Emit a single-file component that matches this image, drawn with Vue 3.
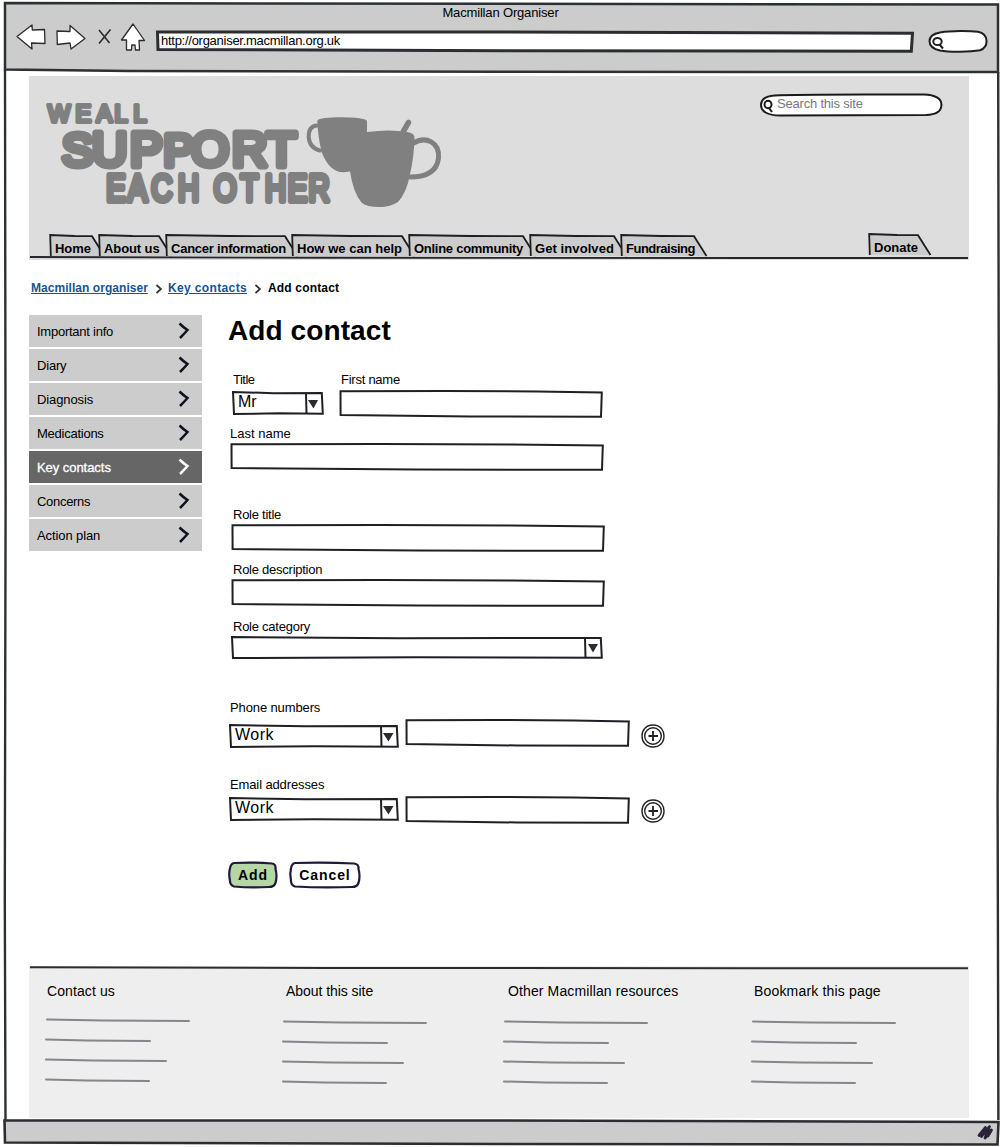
<script setup>
const tabs = [
  { label: 'Home', w: 49, ls: -0.05 },
  { label: 'About us', w: 67, ls: -0.1 },
  { label: 'Cancer information', w: 126, ls: -0.23 },
  { label: 'How we can help', w: 117, ls: 0.02 },
  { label: 'Online community', w: 121, ls: -0.27 },
  { label: 'Get involved', w: 91, ls: 0.08 },
  { label: 'Fundraising', w: 80, ls: -0.5 },
]
const donate = { label: 'Donate', w: 56, ls: 0 }

const menu = [
  { label: 'Important info', ls: -0.25 },
  { label: 'Diary', ls: -0.2 },
  { label: 'Diagnosis', ls: -0.1 },
  { label: 'Medications', ls: -0.25 },
  { label: 'Key contacts', ls: -0.05, active: true },
  { label: 'Concerns', ls: -0.3 },
  { label: 'Action plan', ls: -0.1 },
]

const columns = [
  { title: 'Contact us', cls: 'c1' },
  { title: 'About this site', cls: 'c2' },
  { title: 'Other Macmillan resources', cls: 'c3' },
  { title: 'Bookmark this page', cls: 'c4' },
]
const rules = [
  { x: 2, w: 144 },
  { x: 1, w: 106 },
  { x: 1, w: 122 },
  { x: 1, w: 105 },
]

// Slightly uneven rectangle, as if drawn with a pen
const inputPath = (w, h) =>
  `M1.5 1.2L${w * 0.4} 1L${w * 0.75} 1.4L${w - 1.2} 2.6L${w - 2} ${h - 1.2}L${w * 0.5} ${h - 1.5}L1.6 ${h - 3}Z`
const selectPath = (w, h) =>
  `M1 1L${w * 0.45} 2.2L${w - 2.2} 2L${w - 1.2} ${h - 1.2}L${w * 0.5} ${h - 1.7}L2 ${h - 1}Z` +
  `M${w - 18} 2L${w - 17.5} ${h - 1.5}`
const tabPath = (w) => `M.8 22L.2 1L${w / 2} 2L${w - 7} 2.2L${w + 5.5} 22`
</script>

<template>
  <div class="window">
    <svg class="frame" width="1001" height="1147" fill="none" stroke="#2d3033" stroke-width="2.4">
      <path d="M5 70L5.6 500L4.8 900L5.5 1120" />
      <path d="M998.2 72L998.8 400L997.6 800L998.4 1120" />
    </svg>

    <header class="chrome">
      <svg class="back" width="1001" height="76">
        <path d="M5 3L500 3.8L998 4.5L998 72L500 71.8L130 71L5 69.5Z" fill="#ccc" stroke="#2d3033" stroke-width="2.5" />
      </svg>
      <div class="title">Macmillan Organiser</div>
      <div class="toolbar">
        <svg class="nav-icons" width="132" height="32" viewBox="0 0 132 32" fill="#fff" stroke="#2b2b2f" stroke-width="1.3" stroke-linejoin="round">
          <path d="M1 14.5L16 3L16.3 8L28.5 7.5L29 21.5L15.5 21L16 27Z" />
          <path d="M41 9L54 9.5L54 3.5L69 16.5L55 27L54 21L41.3 22.5Z" />
          <path d="M83 8L93.5 21M94.5 7.5L83 21.5" fill="none" stroke-width="1.6" />
          <path d="M117 2L128.5 18.5L123 18.5L123.5 28L119.5 28L119 23L115.8 23L115.5 28L110.5 28L110.5 18L105.5 18Z" />
        </svg>
        <div class="address">
          <svg class="back" width="758" height="24"><path d="M1.5 2L350 2L756.5 3.3L755.3 21.3L350 20.8L2 19.5Z" fill="#fff" stroke="#2b2d30" stroke-width="3" /></svg>
          <span>http://organiser.macmillan.org.uk</span>
        </div>
        <svg class="mini-search" width="60" height="24" fill="#fff" stroke="#1f1f22" stroke-width="2">
          <path d="M12 2.5C24 .5 42 .8 50 1.8C61 4 61 17 52 20.3C42 22 22 22.5 12 20.5C-2 17 -2 5 12 2.5Z" />
          <ellipse cx="9.5" cy="11.5" rx="4.2" ry="3.6" />
          <path d="M11.5 14.5L15 18.5" />
        </svg>
      </div>
    </header>

    <div class="page">
      <section class="banner">
        <div class="banner-top">
          <svg class="logo" width="410" height="116" viewBox="40 96 410 116" role="img" fill="#808080" stroke="#808080" stroke-linejoin="round" stroke-linecap="round">
            <text x="48 75.5 83 96.500 114.5 133.5" y="121.5" font-size="23.5" stroke-width="4">WE ALL</text>
            <text x="62 92 130 163.5 191 232 266.5" y="166" font-size="49" stroke-width="7"><tspan font-size="47">S</tspan>UP<tspan font-size="45">P</tspan>ORT</text>
            <text transform="scale(.78 1)" x="136.2 163.8 193.9 228.2 262 274 308.4 339.7 369 395.400" y="200.8" font-size="37.500" stroke-width="6">EACH OTHER</text>
            <path stroke="none" d="M317.3 121Q317 118 337 117.3Q364 117 367 121L367 132Q390 129 407 132Q414 133 414.5 137Q414 158 410 174Q407 192 398 202Q390 207 380 207Q366 207 361.5 202.5Q353 192 350 171.5Q345 172.5 340 172Q329 170 322 153Q318 138 317.3 121Z" />
            <path fill="none" stroke-width="4" d="M317 125.5Q308.5 126 308.7 137Q309.5 148 320 150.5" />
            <path fill="none" stroke-width="5" d="M413 143.5C426 135 440 143 438.5 158C437 172 426 177 410 177" />
            <path fill="none" stroke-width="5.5" d="M403 132L408.5 122.5" />
          </svg>
          <div class="site-search">
            <svg class="back" width="184" height="24" fill="#fff" stroke="#1a1a1d" stroke-width="2">
              <path d="M15 2.5C40 1 90 1.5 164 1.5C176 2 181.5 6 181.5 12C181 19 176 21.5 166 22C110 22.5 60 22.5 20 22.5C7 22.5 1 18 1 12C1 6 7 3 15 2.5Z" />
              <ellipse cx="8" cy="11.5" rx="3.5" ry="3.8" />
              <path d="M9 15L12 19" />
            </svg>
            <span>Search this site</span>
          </div>
        </div>
        <nav class="tabs">
          <a v-for="t in tabs" :key="t.label" class="tab" :style="{ width: t.w + 'px', letterSpacing: t.ls + 'px' }">
            <svg class="back" :width="t.w + 8" height="24"><path :d="tabPath(t.w)" fill="#ccc" stroke="#1d1e22" stroke-width="1.8" /></svg>
            <span>{{ t.label }}</span>
          </a>
          <a class="tab donate" :style="{ width: donate.w + 'px', letterSpacing: donate.ls + 'px' }">
            <svg class="back" :width="donate.w + 8" height="24"><path :d="tabPath(donate.w)" fill="#ccc" stroke="#1d1e22" stroke-width="1.8" /></svg>
            <span>{{ donate.label }}</span>
          </a>
        </nav>
        <svg class="rule" width="940" height="4"><path d="M1 1L300 1.800L939 2" stroke="#26272b" stroke-width="1.9" fill="none" /></svg>
      </section>

      <nav class="crumbs">
        <a class="k1">Macmillan organiser</a>
        <svg width="8" height="10"><path d="M1.5 1L6 5L1.5 9" fill="none" stroke="#333" stroke-width="1.7" /></svg>
        <a class="k2">Key contacts</a>
        <svg width="8" height="10"><path d="M1.5 1L6 5L1.5 9" fill="none" stroke="#333" stroke-width="1.7" /></svg>
        <b class="k3">Add contact</b>
      </nav>

      <div class="body">
        <aside class="menu">
          <a v-for="m in menu" :key="m.label" :class="{ active: m.active }" :style="{ letterSpacing: m.ls + 'px' }">
            <span>{{ m.label }}</span>
            <svg width="12" height="18" viewBox="0 0 12 18"><path d="M1.5 1.5Q5 5 9.5 8Q6 12 2 16" fill="none" stroke="currentColor" stroke-width="2.5" /></svg>
          </a>
        </aside>

        <main class="form">
          <h1>Add contact</h1>
          <div class="row names">
            <div class="field title-field">
              <label class="in1">Title</label>
              <div class="select s-title">
                <svg class="back" width="92" height="24"><path class="ink" :d="selectPath(92, 24)" /><path class="arrow" d="M76 9L86 9L81.5 17.5Z" /></svg>
                <span>Mr</span>
              </div>
            </div>
            <div class="field first-field">
              <label class="in2">First name</label>
              <svg width="264" height="28"><path class="ink" :d="inputPath(264, 28)" /></svg>
            </div>
          </div>
          <div class="field last-field">
            <label>Last name</label>
            <svg width="374" height="28"><path class="ink" :d="inputPath(374, 28)" /></svg>
          </div>
          <div class="field role-title">
            <label class="in2">Role title</label>
            <svg width="374" height="28"><path class="ink" :d="inputPath(374, 28)" /></svg>
          </div>
          <div class="field role-desc">
            <label class="in2">Role description</label>
            <svg width="374" height="28"><path class="ink" :d="inputPath(374, 28)" /></svg>
          </div>
          <div class="field role-cat">
            <label class="in2">Role category</label>
            <svg width="372" height="24"><path class="ink" :d="selectPath(372, 23)" /><path class="arrow" d="M357 8L367 8L362 16.5Z" /></svg>
          </div>

          <div v-for="g in ['Phone numbers', 'Email addresses']" :key="g" class="field group" :class="g === 'Phone numbers' ? 'phone' : 'email'">
            <label>{{ g }}</label>
            <div class="row contact">
              <div class="select s-kind">
                <svg class="back" width="170" height="25"><path class="ink" :d="selectPath(170, 24)" /><path class="arrow" d="M154 9L164.500 9L159.5 17.500Z" /></svg>
                <span>Work</span>
              </div>
              <svg class="number" width="225" height="28"><path class="ink" :d="inputPath(225, 28)" /></svg>
              <svg class="plus" width="24" height="24" fill="none" stroke="#222">
                <path d="M12 1C20 1 23 7 23 12C23 19 18 23.3 12 23C5 23 1 18 1 12C1 6 5 1 12 1Z" stroke-width="1.4" />
                <circle cx="12" cy="12" r="8.3" stroke-width="1.4" />
                <path d="M12 7V17M7.5 12H17" stroke-width="1.8" />
              </svg>
            </div>
          </div>

          <div class="row buttons">
            <button class="add">
              <svg class="back" width="50" height="28"><path d="M6 2Q25 1 44 2.5Q48 3 47.5 8Q49.5 15 47.5 22Q46 26 41 26Q22 27 6 25.5Q2 24 2 20Q.5 13 2 7Q3 2.5 6 2Z" fill="#b7d6a5" stroke="#21173f" stroke-width="2.2" /></svg>
              <span>Add</span>
            </button>
            <button class="cancel">
              <svg class="back" width="72" height="28"><path d="M6 2Q36 1 65 2.5Q70 3 69.5 8Q71.5 15 69.5 22Q68 26 63 26Q32 27 6 25.5Q2 24 2 20Q.5 13 2 7Q3 2.5 6 2Z" fill="#fff" stroke="#21173f" stroke-width="2.2" /></svg>
              <span>Cancel</span>
            </button>
          </div>
        </main>
      </div>

      <footer class="footer">
        <svg class="rule" width="940" height="4"><path d="M1 1.3L300 2L939 2.3" stroke="#2b2c30" stroke-width="2" fill="none" /></svg>
        <div class="cols">
          <div v-for="c in columns" :key="c.cls" class="col" :class="c.cls">
            <h3>{{ c.title }}</h3>
            <svg width="150" height="70" fill="none" stroke="#85868a" stroke-width="2" stroke-linecap="round">
              <path v-for="(r, i) in rules" :key="i" :d="`M${r.x + 1} ${i * 20 + 2.5}L${r.x + r.w * 0.4} ${i * 20 + 3.5}L${r.x + r.w - 1} ${i * 20 + 4}`" />
            </svg>
          </div>
        </div>
      </footer>
    </div>

    <div class="status">
      <svg width="1001" height="29">
        <path d="M4.5 2.5L500 2.5L998.5 4L997.5 26.5L500 26L5 24.5Z" fill="#ccc" stroke="#2b2d30" stroke-width="2.6" />
        <path d="M979 17.5L985.5 9.5L981.5 18.5L989.5 8.5L985 20L991.5 12L988 18" fill="none" stroke="#2a2438" stroke-width="2.8" stroke-linejoin="round" stroke-linecap="round" />
      </svg>
    </div>
  </div>
</template>

<style>
body {
  margin: 0;
  background: #fff;
}
</style>

<style scoped>
.window {
  position: relative;
  width: 1001px;
  height: 1147px;
  overflow: hidden;
  display: flex;
  flex-direction: column;
  font: 13px/16px "Liberation Sans", Arial, sans-serif;
  color: #000;
  background: #fff;
}
svg {
  display: block;
  flex: none;
}
.frame,
.back {
  position: absolute;
  left: 0;
  top: 0;
  pointer-events: none;
}
.back {
  overflow: visible;
}
.back ~ * {
  position: relative;
}
.ink {
  fill: #fff;
  stroke: #1f2024;
  stroke-width: 2;
}
.arrow {
  fill: #2b2b2b;
}
.row {
  display: flex;
}

.chrome {
  position: relative;
  height: 76px;
  flex: none;
}
.title {
  height: 16px;
  padding-top: 5px;
  text-align: center;
  letter-spacing: -0.16px;
}
.toolbar {
  display: flex;
  position: relative;
  padding-left: 16px;
}
.nav-icons {
  margin-top: 1px;
}
.address {
  position: relative;
  width: 758px;
  height: 24px;
  margin: 9px 0 0 8px;
}
.address span {
  display: block;
  padding: 3px 0 0 5px;
  letter-spacing: -0.27px;
}
.mini-search {
  margin: 9px 0 0 14px;
}

.page {
  width: 940px;
  margin-left: 29px;
  height: 1042px;
  display: flex;
  flex-direction: column;
  position: relative;
}
.banner {
  height: 184px;
  background: #ddd;
  display: flex;
  flex-direction: column;
}
.banner-top {
  height: 160px;
  display: flex;
  justify-content: space-between;
}
.logo {
  margin: 20px 0 0 11px;
}
.logo text {
  font-family: "Liberation Sans", Arial, sans-serif;
}
.site-search {
  position: relative;
  width: 182px;
  height: 24px;
  margin: 17px 27px 0 0;
}
.site-search span {
  display: block;
  padding: 3px 0 0 17px;
  color: #777;
  letter-spacing: -0.2px;
}
.tabs {
  display: flex;
  height: 21px;
  margin-bottom: 1px;
  padding: 0 0 0 21px;
}
.tab {
  position: relative;
  top: 0;
  flex: none;
  height: 22px;
  font-weight: bold;
  white-space: nowrap;
}
.tab span {
  display: block;
  padding: 7px 0 0 5px;
}
.donate {
  margin: -1px 44px 0 auto;
}
.banner .rule {
  position: relative;
}

.crumbs {
  display: flex;
  align-items: center;
  height: 16px;
  margin: 20px 0 0 2px;
  font-size: 12px;
  font-weight: bold;
}
.crumbs a {
  color: #155594;
  text-decoration: underline;
}
.crumbs svg {
  margin: 2px 5px 0 7px;
}
.k1 {
  width: 117px;
  letter-spacing: 0.05px;
  white-space: nowrap;
}
.k2 {
  letter-spacing: 0.36px;
}
.k3 {
  padding-left: 1px;
  letter-spacing: 0.17px;
}

.body {
  display: flex;
  margin-top: 19px;
  height: 653px;
}
.menu {
  display: flex;
  flex-direction: column;
  gap: 2px;
  width: 173px;
}
.menu a {
  display: flex;
  justify-content: space-between;
  align-items: center;
  height: 32px;
  padding: 0 12px 0 8px;
  background: #ccc;
}
.menu span {
  padding-top: 2px;
}
.menu svg {
  color: #10131f;
}
.menu .active {
  background: #666;
  color: #fff;
  -webkit-text-stroke: 0.3px #fff;
}
.menu .active svg {
  color: #fff;
}

.form {
  padding-left: 26px;
}
h1 {
  margin: 0;
  font-size: 28px;
  line-height: 32px;
  letter-spacing: 0.1px;
}
.field {
  display: flex;
  flex-direction: column;
}
label {
  display: block;
  height: 16px;
  white-space: nowrap;
}
.in1 {
  padding-left: 1px;
  letter-spacing: -0.5px;
}
.in2 {
  padding-left: 2px;
  letter-spacing: -0.25px;
}
.names {
  margin: 25px 0 0 4px;
}
.first-field {
  margin-left: 15px;
}
.first-field svg {
  margin-top: 2px;
}
.select {
  position: relative;
  font-size: 16px;
  line-height: 18px;
}
.s-title {
  width: 92px;
  height: 24px;
  margin-top: 3px;
}
.select span {
  display: block;
  padding: 2px 0 0 6px;
}
.last-field {
  margin: 8px 0 0 2px;
}
.role-title {
  margin: 36px 0 0 3px;
}
.last-field svg,
.role-title svg,
.role-desc svg {
  margin-top: 1px;
}
.role-desc {
  margin: 10px 0 0 3px;
}
.role-cat {
  margin: 12px 0 0 3px;
}
.role-cat svg {
  margin-top: 1px;
}
.phone {
  margin: 40px 0 0 1px;
}
.email {
  margin: 29px 0 0 1px;
}
.group label {
  padding-left: 1px;
  letter-spacing: -0.12px;
}
.s-kind {
  width: 170px;
  height: 24px;
  margin-top: 8px;
}
.s-kind span {
  padding-top: 2px;
  letter-spacing: 0.5px;
}
.number {
  margin: 3px 0 0 6px;
}
.plus {
  margin: 8px 0 0 11px;
}
.email .s-kind {
  margin-top: 4px;
}
.email .plus {
  margin-top: 6px;
}
.buttons {
  margin-top: 37px;
  gap: 11px;
}
button {
  position: relative;
  height: 28px;
  padding: 0;
  border: 0;
  background: none;
  color: #000;
  font: bold 14px/16px "Liberation Sans", Arial, sans-serif;
  letter-spacing: 0.9px;
}
.add {
  width: 50px;
}
.cancel {
  width: 72px;
}

.footer {
  height: 152px;
  background: #eee;
}
.cols {
  position: relative;
  display: flex;
  padding-left: 15px;
}
.col {
  margin-top: 12px;
}
.col h3 {
  margin: 0 0 19px;
  font-size: 14px;
  font-weight: normal;
  line-height: 18px;
  white-space: nowrap;
}
.col svg {
  margin-left: -1px;
}
.c1 {
  width: 238px;
}
.c2 {
  width: 221px;
}
.c3 {
  width: 248px;
}
.c1 h3 {
  padding-left: 3px;
  margin-bottom: 17px;
  letter-spacing: 0.1px;
}
.c1 svg {
  margin-left: 0;
}
.c2 h3 {
  padding-left: 4px;
  letter-spacing: -0.05px;
}
.c3 h3 {
  padding-left: 5px;
  letter-spacing: 0.12px;
}
.c4 h3 {
  padding-left: 3px;
  letter-spacing: 0.17px;
}

.status {
  position: relative;
  height: 29px;
}
</style>
